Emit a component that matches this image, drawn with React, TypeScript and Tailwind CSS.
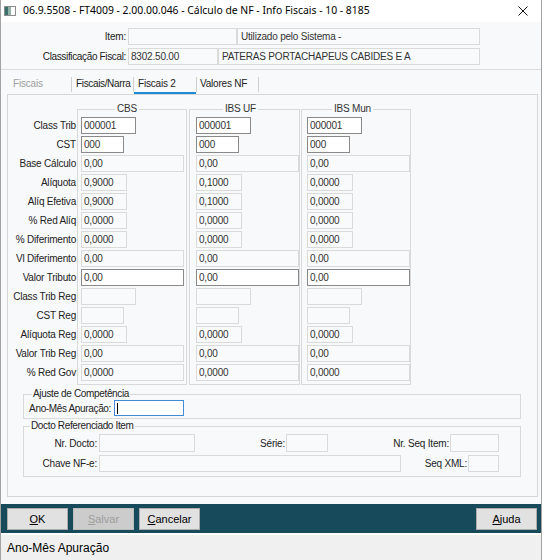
import React from "react";

type Kind = "ct" | "cst" | "wide" | "nar";

const W: Record<Kind, string> = {
  ct: "w-[55px]",
  cst: "w-[43px]",
  wide: "w-[103px]",
  nar: "w-[46px]",
};

const rows: { label: string; kind: Kind; edit?: boolean; vals: string[] }[] = [
  { label: "Class Trib", kind: "ct", edit: true, vals: ["000001", "000001", "000001"] },
  { label: "CST", kind: "cst", edit: true, vals: ["000", "000", "000"] },
  { label: "Base Cálculo", kind: "wide", vals: ["0,00", "0,00", "0,00"] },
  { label: "Alíquota", kind: "nar", vals: ["0,9000", "0,1000", "0,0000"] },
  { label: "Alíq Efetiva", kind: "nar", vals: ["0,9000", "0,1000", "0,0000"] },
  { label: "% Red Alíq", kind: "nar", vals: ["0,0000", "0,0000", "0,0000"] },
  { label: "% Diferimento", kind: "nar", vals: ["0,0000", "0,0000", "0,0000"] },
  { label: "Vl Diferimento", kind: "wide", vals: ["0,00", "0,00", "0,00"] },
  { label: "Valor Tributo", kind: "wide", edit: true, vals: ["0,00", "0,00", "0,00"] },
  { label: "Class Trib Reg", kind: "ct", vals: ["", "", ""] },
  { label: "CST Reg", kind: "cst", vals: ["", "", ""] },
  { label: "Alíquota Reg", kind: "nar", vals: ["0,0000", "0,0000", "0,0000"] },
  { label: "Valor Trib Reg", kind: "wide", vals: ["0,00", "0,00", "0,00"] },
  { label: "% Red Gov", kind: "wide", vals: ["0,0000", "0,0000", "0,0000"] },
];

function Inp({
  w,
  h = "h-[17px]",
  v = "",
  edit = false,
  cls = "",
}: {
  w: string;
  h?: string;
  v?: string;
  edit?: boolean;
  cls?: string;
}) {
  return (
    <div
      className={`${w} ${h} shrink-0 flex items-center pl-[2px] border ${
        edit ? "border-[#8a8a8a] bg-white" : "border-[#dadada] bg-[#f9fafb]"
      } text-[10px] text-[#333] whitespace-nowrap overflow-hidden ${cls}`}
    >
      {v}
    </div>
  );
}

function Group({
  title,
  col,
  cls,
  legendCls,
  padCls,
}: {
  title: string;
  col: number;
  cls: string;
  legendCls: string;
  padCls: string;
}) {
  return (
    <fieldset className={`shrink-0 border border-[#d9d9d9] ${cls}`}>
      <legend className={`text-[10px] leading-[12px] px-[2px] text-[#333] ${legendCls}`}>{title}</legend>
      <div className={`flex flex-col gap-[2px] pt-[2px] pb-[3px] ${padCls}`}>
        {rows.map((r, i) => (
          <Inp key={i} w={W[r.kind]} v={r.vals[col]} edit={r.edit} />
        ))}
      </div>
    </fieldset>
  );
}

function Btn({ children, disabled = false, cls = "" }: { children: React.ReactNode; disabled?: boolean; cls?: string }) {
  return (
    <div
      className={`w-[61px] h-[22px] shrink-0 flex items-center justify-center text-[11px] border ${
        disabled ? "bg-[#cccccc] border-[#bdbdbd] text-[#9d9d9d]" : "bg-[#e1e1e1] border-[#adadad] text-black"
      } ${cls}`}
    >
      {children}
    </div>
  );
}

function TabSep() {
  return <div className="w-px h-[15px] mt-[7px] bg-[#cfcfcf] shrink-0" />;
}

export default function App() {
  return (
    <div className="w-[544px] h-[560px] bg-white font-['Liberation_Sans',Arial,sans-serif] text-[#222] tracking-[-0.2px] overflow-hidden">
      <div className="w-[542px] h-[560px] flex flex-col border-x border-[#a3a3a3] bg-[#f8f9fb]">
        {/* Title bar */}
        <div className="h-[22px] shrink-0 flex items-center bg-white">
          <svg className="ml-[3px] shrink-0" width="12" height="10" viewBox="0 0 12 10">
            <rect x="0.5" y="0.5" width="11" height="9" fill="#ffffff" stroke="#8c8c8c" />
            <rect x="1" y="1" width="3" height="8" fill="#3d6f6a" />
            <rect x="4" y="1" width="3" height="8" fill="#8fb3a8" />
          </svg>
          <span className="ml-[7px] text-[10.4px] text-black tracking-normal font-['Noto_Sans',sans-serif] whitespace-nowrap">
            06.9.5508 - FT4009 - 2.00.00.046 - Cálculo de NF - Info Fiscais - 10 - 8185
          </span>
          <svg className="ml-auto mr-[13px] shrink-0" width="10" height="10" viewBox="0 0 10 10">
            <path d="M0.5 0.5 L9.5 9.5 M9.5 0.5 L0.5 9.5" stroke="#111" strokeWidth="1" />
          </svg>
        </div>

        {/* Header */}
        <div className="shrink-0 flex flex-col gap-[3px] pt-[6px] pb-[4px] border-b border-[#dcdcdc] text-[10px]">
          <div className="flex items-center">
            <div className="w-[127px] pr-[2px] text-right">Item:</div>
            <Inp w="w-[109px]" />
            <Inp w="w-[243px]" v="Utilizado pelo Sistema -" cls="pl-[3px]" />
          </div>
          <div className="flex items-center">
            <div className="w-[127px] pr-[2px] text-right whitespace-nowrap tracking-[-0.35px]">Classificação Fiscal:</div>
            <Inp w="w-[90px]" v="8302.50.00" />
            <Inp w="w-[262px]" v="PATERAS PORTACHAPEUS CABIDES E A" cls="pl-[3px]" />
          </div>
        </div>

        {/* Tabs */}
        <div className="h-[24px] shrink-0 flex ml-[6px] text-[10px]">
          <div className="w-[64px] pl-[6px] pt-[4px] flex items-center border-b-2 border-transparent text-[#a0a0a0]">Fiscais</div>
          <TabSep />
          <div className="w-[61px] pl-[4px] pt-[4px] flex items-center border-b-2 border-transparent whitespace-nowrap tracking-[-0.35px]">Fiscais/Narra</div>
          <TabSep />
          <div className="w-[62px] pl-[4px] pt-[4px] flex items-center border-b-2 border-[#1e8ad6] whitespace-nowrap">Fiscais 2</div>
          <TabSep />
          <div className="w-[61px] pl-[3px] pt-[4px] flex items-center border-b-2 border-transparent whitespace-nowrap">Valores NF</div>
          <TabSep />
        </div>

        {/* Panel */}
        <div className="ml-[6px] w-[531px] h-[403px] shrink-0 border border-[#d6d6d6] text-[10px]">
          <div className="flex mt-[8px]">
            <div className="w-[69px] shrink-0 flex flex-col gap-[2px] pt-[14px] pr-[1px]">
              {rows.map((r, i) => (
                <div key={i} className="h-[17px] flex items-center justify-end whitespace-nowrap">
                  {r.label}
                </div>
              ))}
            </div>
            <Group title="CBS" col={0} cls="w-[110px]" legendCls="ml-[37px]" padCls="pl-[3px]" />
            <Group title="IBS UF" col={1} cls="w-[111px] ml-[2px]" legendCls="ml-[33px]" padCls="pl-[6px]" />
            <Group title="IBS Mun" col={2} cls="w-[110px] ml-[1px]" legendCls="ml-[30px]" padCls="pl-[5px]" />
          </div>

          {/* Ajuste de Competência */}
          <fieldset className="ml-[15px] mt-[3px] w-[498px] border border-[#d9d9d9] pb-[2px]">
            <legend className="ml-[8px] px-[1px] text-[10px] leading-[12px] tracking-[-0.35px]">Ajuste de Competência</legend>
            <div className="flex items-center">
              <div className="w-[88px] pr-[1px] text-right whitespace-nowrap tracking-[-0.35px]">Ano-Mês Apuração:</div>
              <div className="ml-[2px] w-[70px] h-[16px] border border-[#3f8bd6] bg-white flex items-center pl-[2px]">
                <div className="w-px h-[11px] bg-black" />
              </div>
            </div>
          </fieldset>

          {/* Docto Referenciado Item */}
          <fieldset className="ml-[15px] mt-[1px] w-[498px] border border-[#d9d9d9] pb-[4px]">
            <legend className="ml-[6px] px-[1px] text-[10px] leading-[12px] tracking-[-0.35px]">Docto Referenciado Item</legend>
            <div className="flex items-center pt-[2px]">
              <div className="w-[75px] pr-[2px] text-right whitespace-nowrap">Nr. Docto:</div>
              <Inp w="w-[96px]" h="h-[18px]" />
              <div className="w-[91px] pr-[1px] text-right whitespace-nowrap">Série:</div>
              <Inp w="w-[42px]" h="h-[18px]" />
              <div className="w-[122px] pr-[1px] text-right whitespace-nowrap">Nr. Seq Item:</div>
              <Inp w="w-[49px]" h="h-[18px]" />
            </div>
            <div className="flex items-center mt-[3px]">
              <div className="w-[75px] pr-[2px] text-right whitespace-nowrap">Chave NF-e:</div>
              <Inp w="w-[302px]" />
              <div className="w-[67px] pr-[1px] text-right whitespace-nowrap">Seq XML:</div>
              <Inp w="w-[31px]" />
            </div>
          </fieldset>
        </div>

        {/* Button bar */}
        <div className="mt-[7px] h-[29px] shrink-0 bg-[#174a5b] flex items-start pt-[4px] pl-[6px] pr-[4px] tracking-normal">
          <Btn>
            <span className="underline">O</span>K
          </Btn>
          <Btn disabled cls="ml-[5px]">
            <span className="underline">S</span>alvar
          </Btn>
          <Btn cls="ml-[5px]">
            <span className="underline">C</span>ancelar
          </Btn>
          <Btn cls="ml-auto">
            <span className="underline">A</span>juda
          </Btn>
        </div>

        {/* Status bar */}
        <div className="flex-1 border-t-2 border-white bg-[#f0f0f0] flex items-center pl-[6px] text-[12px] text-black tracking-normal">
          Ano-Mês Apuração
        </div>
      </div>
    </div>
  );
}
